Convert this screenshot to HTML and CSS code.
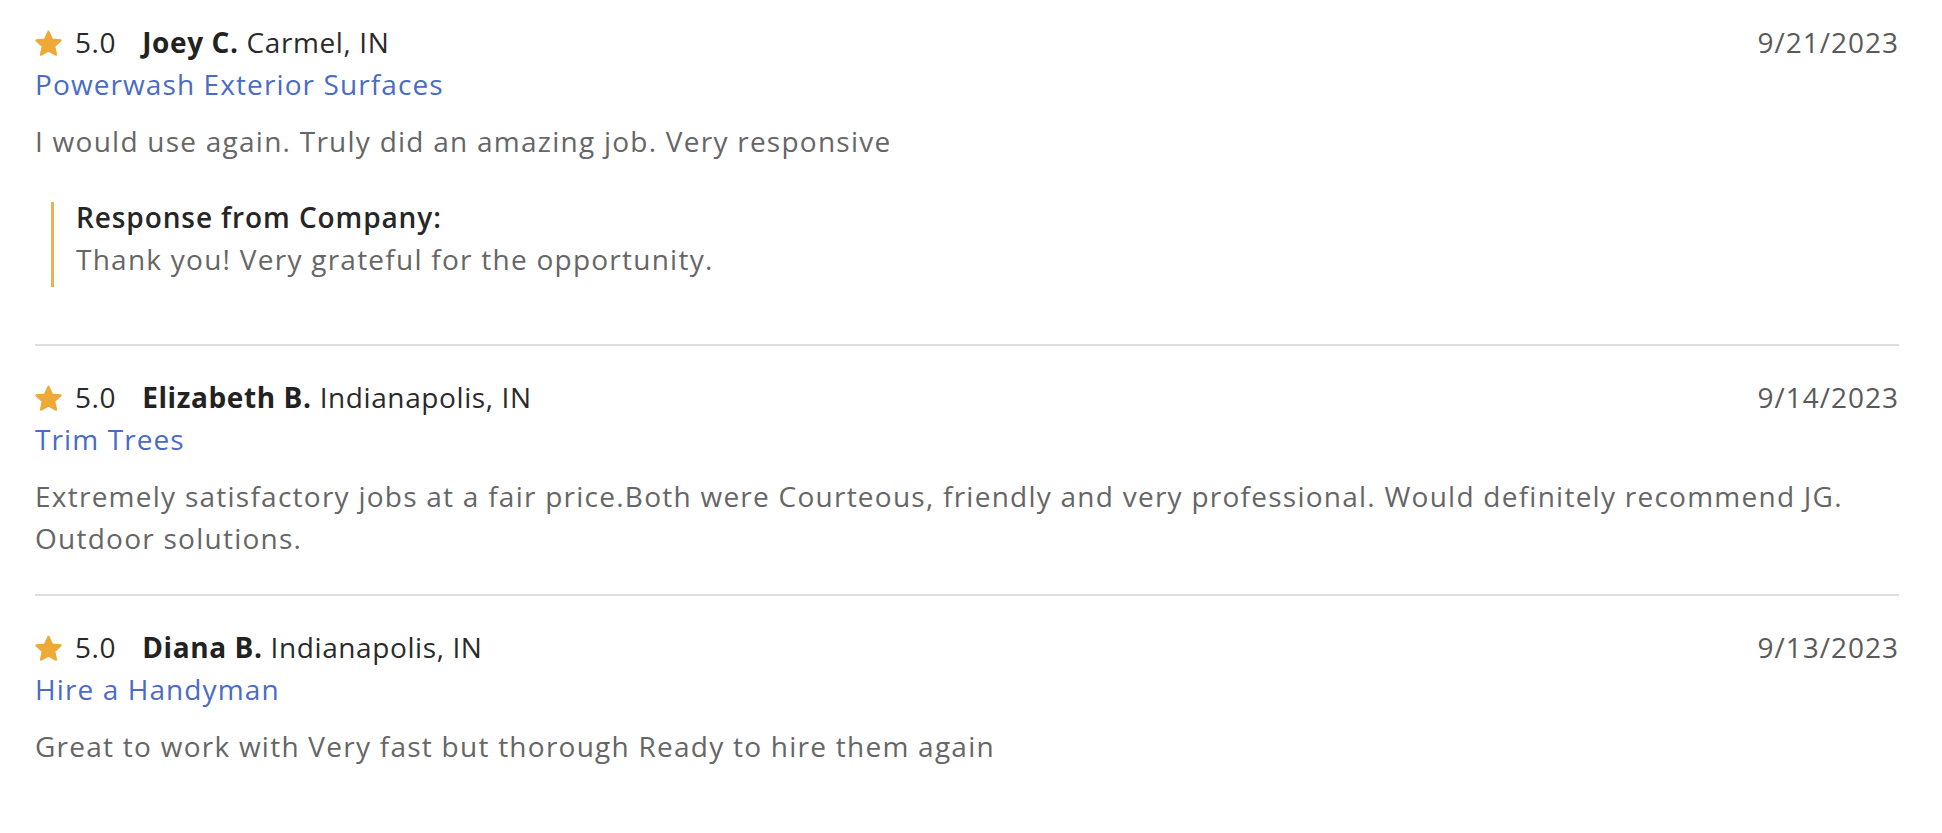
FILE: index.html
```html
<!DOCTYPE html>
<html lang="en">
<head>
<meta charset="utf-8">
<title>Reviews</title>
<link rel="stylesheet" href="styles.css">
</head>
<body>
<div class="reviews">
  <article class="review">
    <div class="review-head">
      <div class="who">
        <svg class="star" viewBox="0 0 24 24"><path d="M12 2.8l2.8 6.1 6.6.7-4.9 4.5 1.4 6.6L12 17.4l-5.9 3.3 1.4-6.6-4.9-4.5 6.6-.7z"/></svg>
        <span class="rating">5.0</span>
        <span class="name">Joey C.</span>
        <span class="place">Carmel, IN</span>
      </div>
      <span class="date">9/21/2023</span>
    </div>
    <div class="service">Powerwash Exterior Surfaces</div>
    <p class="text">I would use again. Truly did an amazing job. Very responsive</p>
    <div class="response">
      <div class="response-label">Response from Company:</div>
      <div class="response-text">Thank you! Very grateful for the opportunity.</div>
    </div>
  </article>
  <article class="review">
    <div class="review-head">
      <div class="who">
        <svg class="star" viewBox="0 0 24 24"><path d="M12 2.8l2.8 6.1 6.6.7-4.9 4.5 1.4 6.6L12 17.4l-5.9 3.3 1.4-6.6-4.9-4.5 6.6-.7z"/></svg>
        <span class="rating">5.0</span>
        <span class="name">Elizabeth B.</span>
        <span class="place">Indianapolis, IN</span>
      </div>
      <span class="date">9/14/2023</span>
    </div>
    <div class="service">Trim Trees</div>
    <p class="text">Extremely satisfactory jobs at a fair price.Both were Courteous, friendly and very professional. Would definitely recommend JG. Outdoor solutions.</p>
  </article>
  <article class="review">
    <div class="review-head">
      <div class="who">
        <svg class="star" viewBox="0 0 24 24"><path d="M12 2.8l2.8 6.1 6.6.7-4.9 4.5 1.4 6.6L12 17.4l-5.9 3.3 1.4-6.6-4.9-4.5 6.6-.7z"/></svg>
        <span class="rating">5.0</span>
        <span class="name">Diana B.</span>
        <span class="place">Indianapolis, IN</span>
      </div>
      <span class="date">9/13/2023</span>
    </div>
    <div class="service">Hire a Handyman</div>
    <p class="text">Great to work with Very fast but thorough Ready to hire them again</p>
  </article>
</div>
</body>
</html>
```
FILE: styles.css
```css
html, body {
  margin: 0;
  background: #ffffff;
}
body {
  font-family: "Open Sans", "Liberation Sans", sans-serif;
  font-size: 28px;
  line-height: 42px;
  letter-spacing: 1.25px;
  color: #666666;
}
.reviews {
  padding: 21px 43px 0 35px;
}
.review {
  padding-bottom: 35px;
}
.review + .review {
  border-top: 2px solid #dedede;
  padding-top: 30px;
}
.review-head {
  display: flex;
  justify-content: space-between;
  align-items: center;
  height: 42px;
}
.who {
  display: flex;
  align-items: center;
  white-space: pre;
  letter-spacing: 0.6px;
}
.star {
  width: 31px;
  height: 31px;
  margin-left: -2px;
  margin-right: 11px;
  margin-top: 2px;
}
.star path {
  fill: #eea936;
  stroke: #eea936;
  stroke-width: 1.6;
  stroke-linejoin: round;
}
.rating {
  color: #2a2a2a;
  font-weight: 500;
  margin-right: 26px;
}
.name {
  color: #222222;
  font-weight: 700;
  margin-right: 8px;
}
.place {
  color: #2a2a2a;
}
.date {
  color: #5a5a5a;
  font-weight: 500;
  letter-spacing: 1px;
}
.service {
  color: #4a6bc6;
  font-weight: 500;
  letter-spacing: 1.1px;
}
.text {
  margin: 15px 0 0;
  color: #666666;
}
.response {
  margin: 40px 0 22px 16px;
  border-left: 3px solid #e2b357;
  padding: 0 0 7px 22px;
}
.response-label {
  color: #262626;
  font-weight: 600;
  line-height: 30px;
  margin-bottom: 6px;
  letter-spacing: 0.9px;
}
.response-text {
  color: #666666;
}
```
